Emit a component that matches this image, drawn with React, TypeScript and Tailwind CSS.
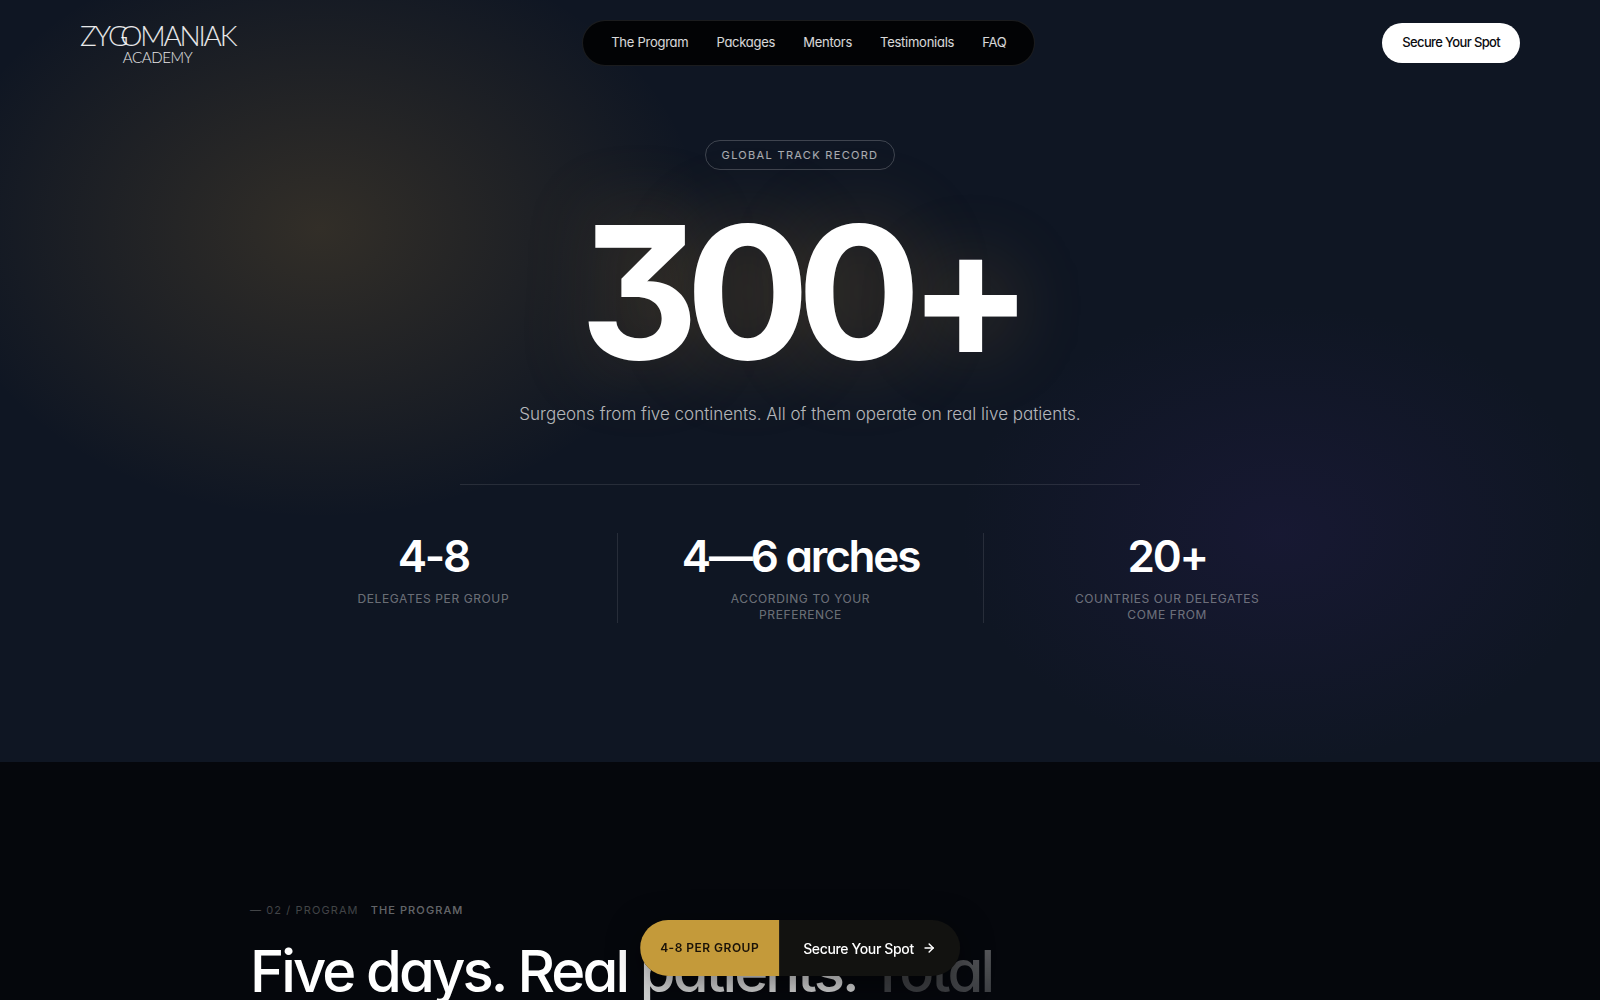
import { ArrowRight } from 'lucide-react';

const navLinks = ['The Program', 'Packages', 'Mentors', 'Testimonials', 'FAQ'];

const stats = [
  { value: '4-8', label: 'Delegates per group' },
  { value: '4—6 arches', label: 'According to your preference' },
  { value: '20+', label: 'Countries our delegates come from' },
];

function Logo() {
  return (
    <a
      href="#top"
      className="flex flex-col items-center font-[Lato,sans-serif] font-light text-white/90"
    >
      <span className="text-[28px] leading-7 tracking-[-0.08em]">
        ZY<span className="-mr-1.5">G</span>OMANIAK
      </span>
      <span className="text-[15px] leading-4 tracking-tight">ACADEMY</span>
    </a>
  );
}

function Header() {
  return (
    <header className="flex items-center justify-between px-20 pt-5">
      <Logo />
      <nav className="flex h-[46px] items-center gap-7 rounded-full border border-white/10 bg-[#020305] px-7">
        {navLinks.map((link) => (
          <a key={link} href="#program" className="text-[13px] tracking-[-0.02em] text-white/85">
            {link}
          </a>
        ))}
      </nav>
      <button className="h-10 rounded-full bg-white px-5 text-[13px] font-medium tracking-tighter text-[#0b0b0f]">
        Secure Your Spot
      </button>
    </header>
  );
}

function TrackRecord() {
  return (
    <div className="flex flex-col items-center pt-[74px] pb-[139px]">
      <span className="flex h-[30px] items-center rounded-full border border-white/20 px-4 text-[11px] tracking-[0.12em] text-white/65 uppercase">
        Global Track Record
      </span>
      <h1 className="mt-7 text-[184px] leading-[188px] font-bold tracking-[-0.07em] text-white [text-shadow:0_0_80px_rgba(201,150,60,0.3)]">
        300+
      </h1>
      <p className="mt-3.5 text-[17px] leading-7 font-light text-white/70">
        Surgeons from five continents. All of them operate on real live patients.
      </p>
      <hr className="mt-14 w-full max-w-[680px] border-white/10" />
      <dl className="mt-12 grid w-full max-w-[1100px] grid-cols-3">
        {stats.map((stat) => (
          <div
            key={stat.label}
            className="flex flex-col-reverse items-center justify-end border-l border-white/10 first:border-l-0"
          >
            <dt className="mt-3 max-w-[190px] text-center text-[12px] leading-4 tracking-wider text-white/40 uppercase">
              {stat.label}
            </dt>
            <dd className="text-[44px] leading-[46px] font-semibold tracking-tighter text-white">
              {stat.value}
            </dd>
          </div>
        ))}
      </dl>
    </div>
  );
}

function Program() {
  return (
    <section id="program" className="mx-auto w-full max-w-[1100px] pt-[140px]">
      <div className="flex gap-3 text-[11px] leading-4 tracking-widest uppercase">
        <span className="text-white/25">— 02 / Program</span>
        <span className="font-medium text-white/40">The Program</span>
      </div>
      <h2 className="mt-5 text-[58px] leading-[66px] font-medium tracking-tighter whitespace-nowrap text-white">
        Five days. Real{' '}
        <span className="bg-linear-to-b from-white to-white/80 bg-clip-text text-transparent">patients.</span>{' '}
        <span className="bg-linear-to-b from-white/35 to-white/20 bg-clip-text text-transparent">Total</span>
      </h2>
    </section>
  );
}

function FloatingCta() {
  return (
    <button className="fixed bottom-6 left-1/2 flex h-14 -translate-x-1/2 overflow-hidden rounded-full bg-[#121210] whitespace-nowrap shadow-[0_8px_32px_rgba(0,0,0,0.5)]">
      <span className="flex items-center bg-[#c49a3a] px-5 text-[12px] font-semibold tracking-[0.04em] text-[#1a1208]">
        4-8 PER GROUP
      </span>
      <span className="flex items-center gap-2 px-6 text-[14px] font-medium tracking-tight text-white">
        Secure Your Spot
        <ArrowRight size={14} strokeWidth={2.5} />
      </span>
    </button>
  );
}

export default function App() {
  return (
    <div
      id="top"
      className="h-screen overflow-hidden bg-[#05070c] font-[Inter,sans-serif] [font-feature-settings:'cv09','cv11']"
    >
      <main>
        <section className="bg-[#0f1623] bg-[radial-gradient(ellipse_24%_38%_at_20%_30%,rgba(201,150,60,0.19),transparent),radial-gradient(ellipse_20%_30%_at_80%_70%,rgba(60,35,120,0.18),transparent)]">
          <Header />
          <TrackRecord />
        </section>
        <Program />
      </main>
      <FloatingCta />
    </div>
  );
}
